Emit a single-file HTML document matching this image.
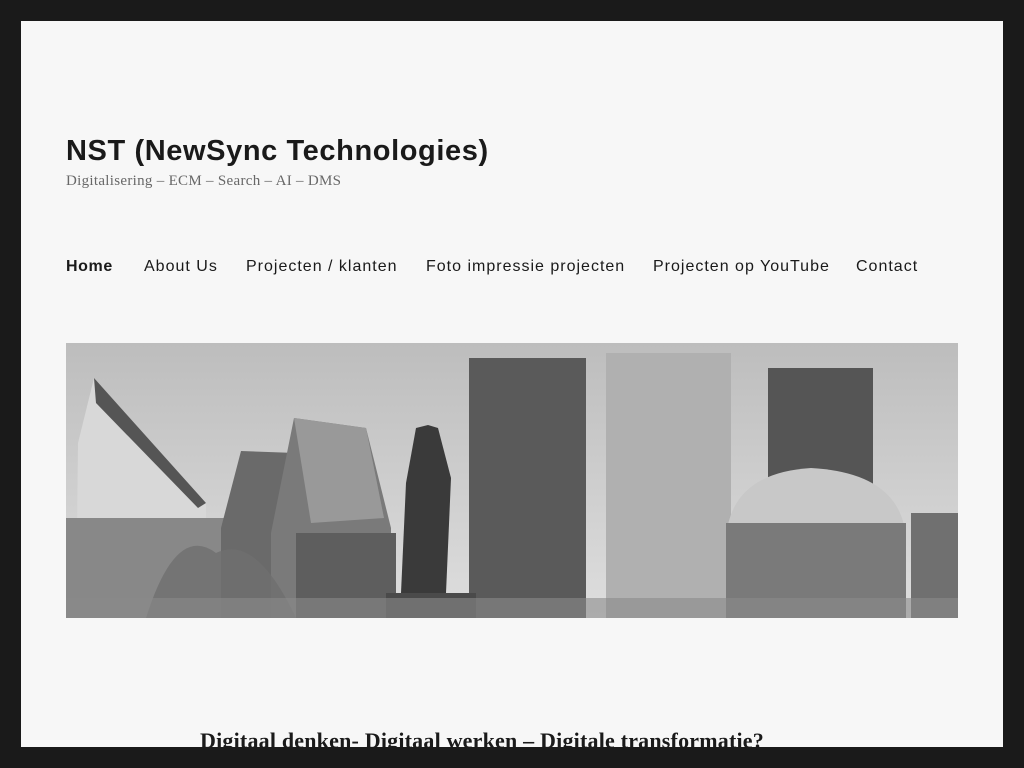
<!DOCTYPE html>
<html><head><meta charset="utf-8"><style>
html,body{margin:0;padding:0;}
body{width:1024px;height:768px;background:#1a1a1a;position:relative;overflow:hidden;font-family:"Liberation Sans",sans-serif;}
.page{position:absolute;left:21px;top:21px;width:982px;height:726px;background:#f7f7f7;overflow:hidden;}
.t{position:absolute;white-space:nowrap;color:#1a1a1a;}
.title{left:45px;top:114px;font-size:29px;font-weight:bold;letter-spacing:0.6px;}
.tag{left:45px;top:152px;font-family:"Liberation Serif",serif;font-size:15px;color:#686868;letter-spacing:0.3px;}
.nav{top:237px;font-size:16px;letter-spacing:1px;}
.h{left:179px;top:707px;font-family:"Liberation Serif",serif;font-weight:bold;font-size:22px;letter-spacing:0.2px;}
svg{position:absolute;left:45px;top:322px;}
</style></head><body>
<div class="page">
<div class="t title">NST (NewSync Technologies)</div>
<div class="t tag">Digitalisering – ECM – Search – AI – DMS</div>
<div class="t nav" style="left:45px;font-weight:bold;letter-spacing:0.6px">Home</div>
<div class="t nav" style="left:123px">About Us</div>
<div class="t nav" style="left:225px">Projecten / klanten</div>
<div class="t nav" style="left:405px">Foto impressie projecten</div>
<div class="t nav" style="left:632px">Projecten op YouTube</div>
<div class="t nav" style="left:835px">Contact</div>
<svg width="892" height="275" viewBox="0 0 892 275">
<defs><linearGradient id="s" x1="0" y1="0" x2="0" y2="1"><stop offset="0" stop-color="#bdbdbd"/><stop offset="1" stop-color="#dedede"/></linearGradient></defs>
<rect width="892" height="275" fill="url(#s)"/>
<path d="M12 100 L28 35 L140 160 L140 275 L10 275Z" fill="#d8d8d8"/>
<path d="M28 35 L140 160 L132 165 L30 60Z" fill="#555"/>
<rect x="0" y="175" width="190" height="100" fill="#888"/>
<path d="M155 185 L175 108 L230 110 L230 275 L155 275Z" fill="#6a6a6a"/>
<path d="M205 190 L228 75 L300 85 L325 185 L325 275 L205 275Z" fill="#7a7a7a"/>
<path d="M228 75 L300 85 L318 175 L245 180Z" fill="#999"/>
<rect x="230" y="190" width="100" height="85" fill="#5e5e5e"/>
<rect x="403" y="15" width="117" height="260" fill="#5a5a5a"/>
<rect x="540" y="10" width="125" height="265" fill="#b0b0b0"/>
<rect x="702" y="25" width="105" height="130" fill="#555"/>
<path d="M660 195 Q665 130 745 125 Q835 130 840 195Z" fill="#c8c8c8"/>
<rect x="660" y="180" width="180" height="95" fill="#7a7a7a"/>
<rect x="845" y="170" width="47" height="105" fill="#707070"/>
<path d="M340 140 L350 85 L362 82 L372 85 L385 135 L380 250 L335 250Z" fill="#3a3a3a"/>
<rect x="320" y="250" width="90" height="25" fill="#4a4a4a"/>
<path d="M80 275 Q110 180 150 210 Q190 190 230 275Z" fill="#6f6f6f" opacity="0.8"/>
<rect x="0" y="255" width="892" height="20" fill="#8a8a8a" opacity="0.6"/>
</svg>
<div class="t h">Digitaal denken- Digitaal werken – Digitale transformatie?</div>
</div>
</body></html>
